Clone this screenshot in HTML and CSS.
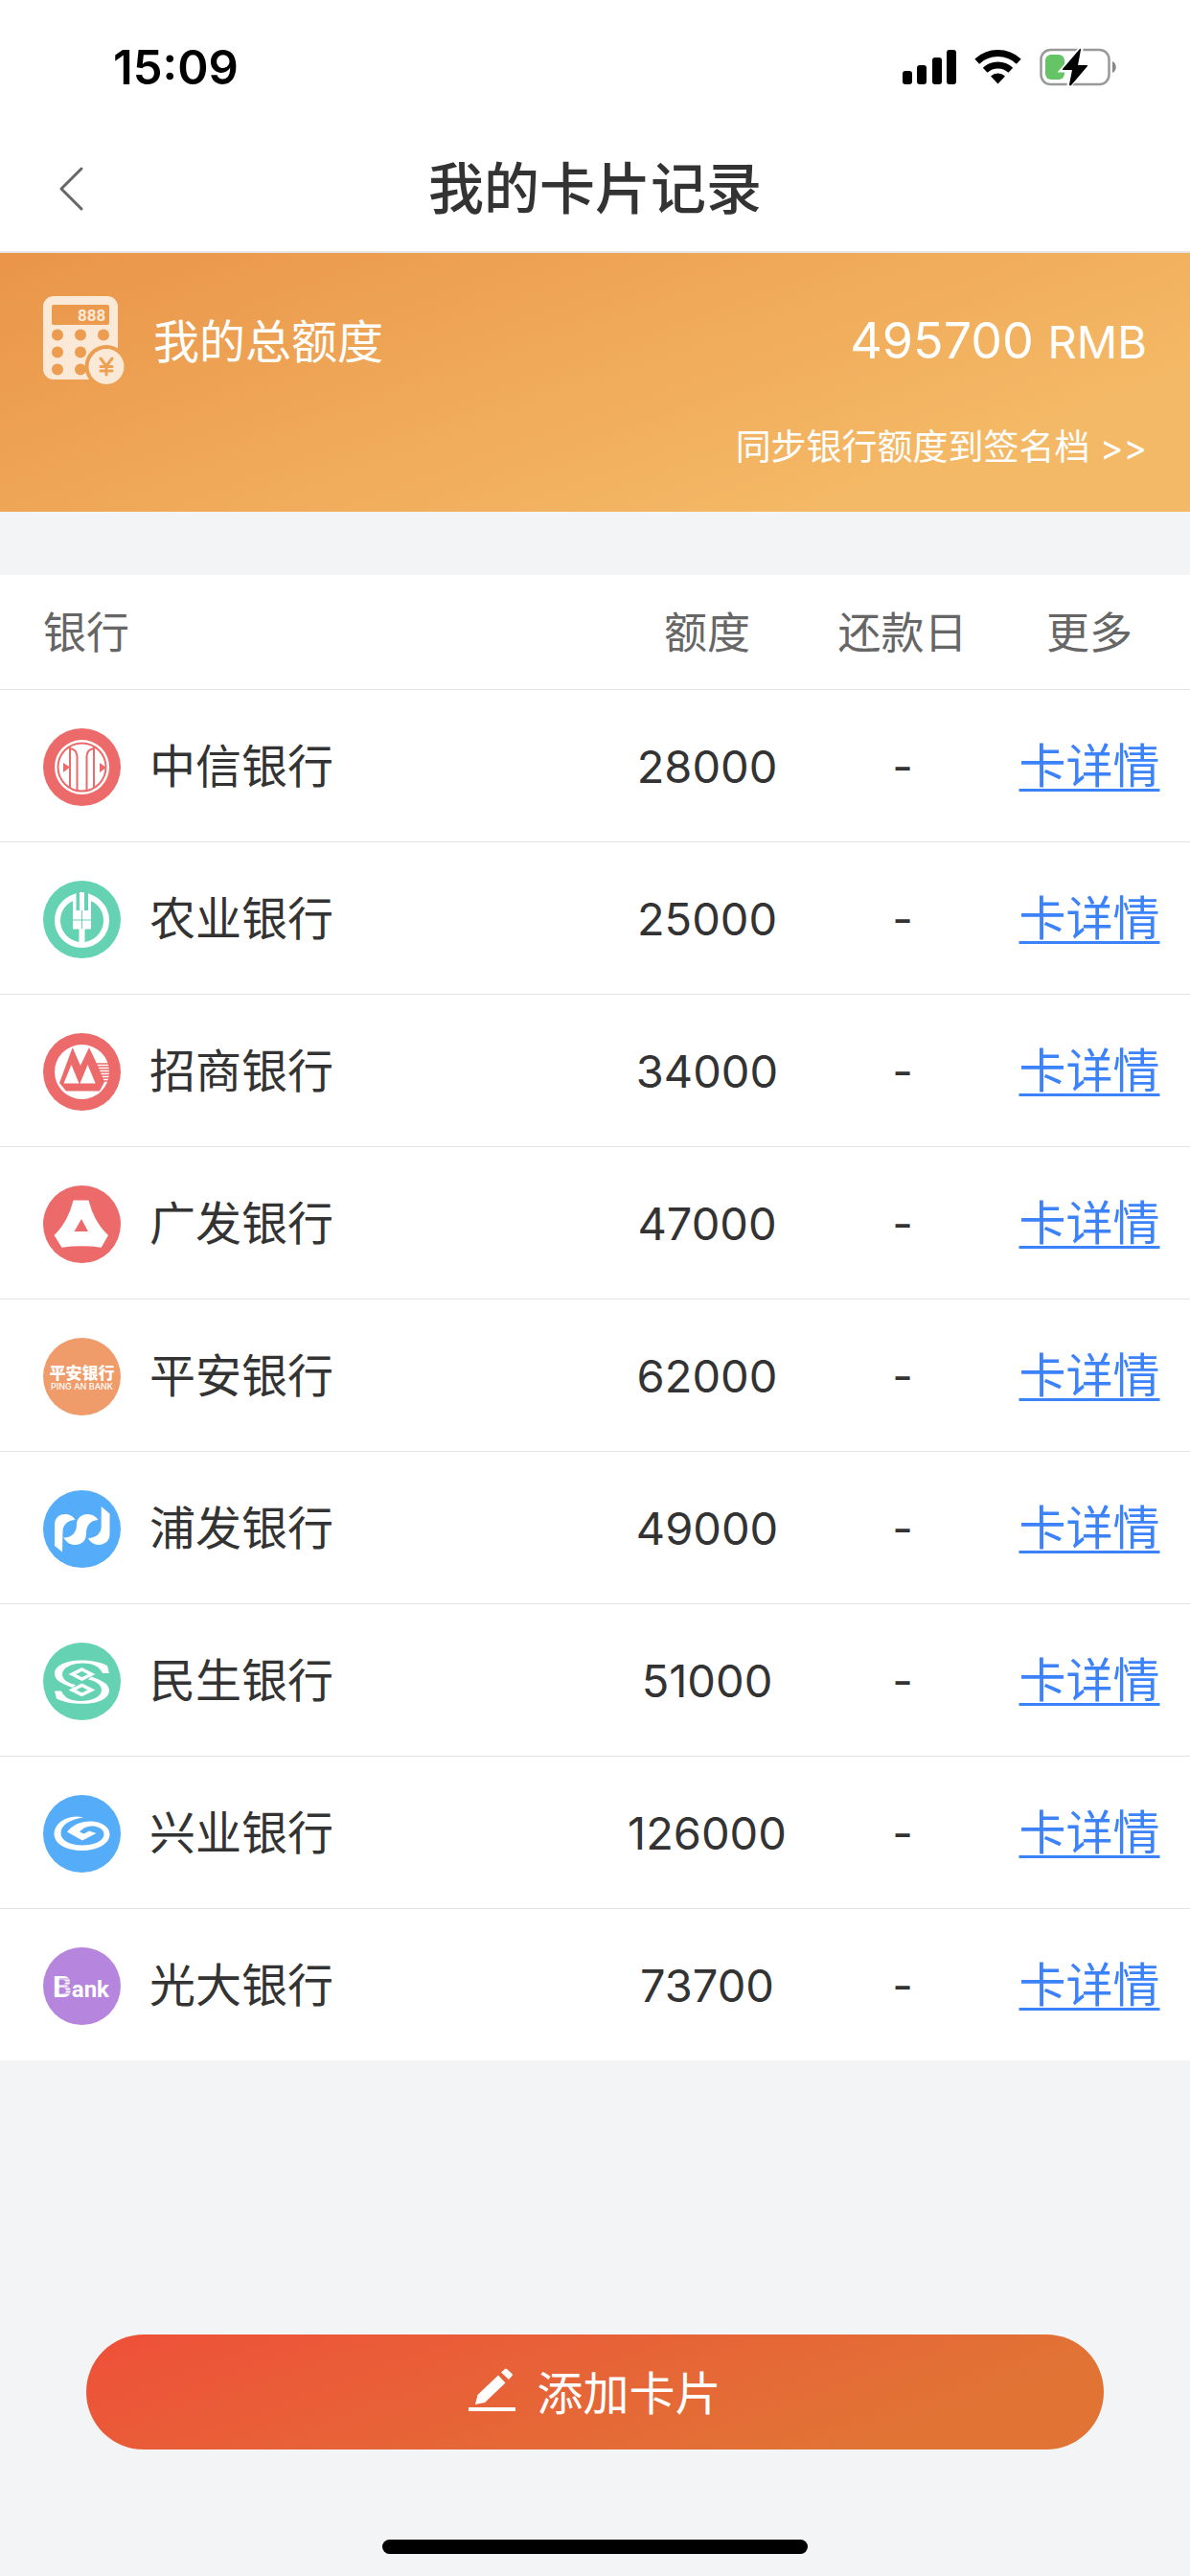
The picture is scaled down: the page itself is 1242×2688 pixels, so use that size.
FILE: index.html
```html
<!DOCTYPE html>
<html lang="zh-CN">
<head>
    <meta charset="UTF-8">
    <meta name="viewport" content="width=device-width, initial-scale=1.0">
    <title>我的卡片记录</title>
    <link rel="stylesheet" href="styles.css">
</head>
<body>

    <!-- Status Bar -->
    <div class="status-bar">
        <span class="time">15:09</span>
        <div class="status-icons">
            <svg width="56" height="36" viewBox="0 0 56 36">
                <rect x="0" y="22" width="10" height="14" rx="3"/>
                <rect x="15" y="16" width="10" height="20" rx="3"/>
                <rect x="31" y="8" width="10" height="28" rx="3"/>
                <rect x="46" y="0" width="10" height="36" rx="3"/>
            </svg>
            <svg width="49" height="36" viewBox="0 0 49 36">
                <path d="M2.7 12.1A32 32 0 0 1 46.3 12.1M11.2 21.2A19.5 19.5 0 0 1 37.8 21.2" fill="none" stroke="#000" stroke-width="7"/>
                <path d="M24.5 35.5L17 27.5A11 11 0 0 1 32 27.5Z"/>
            </svg>
            <svg width="80" height="40" viewBox="0 0 80 40">
                <rect x="1.5" y="2" width="71" height="36" rx="10" fill="none" stroke="#999" stroke-width="2.5"/>
                <path d="M76 14C81 16 81 24 76 26Z" fill="#888"/>
                <rect x="6" y="7" width="20" height="26" rx="6" fill="#65c466"/>
                <path d="M43 1L24 23H34L31 39L50 18H40Z" stroke="#fff" stroke-width="5"/>
                <path d="M42 1L24 22Q23 23 25 23H34L31 38Q31 40 33 39L50 19Q51 18 49 18H40L43 2Q43 0 42 1Z"/>
            </svg>
        </div>
    </div>

    <!-- Navigation Bar -->
    <div class="navbar">
        <a href="#" class="back" aria-label="返回">
            <svg width="28" height="48" viewBox="0 0 28 48">
                <path d="M25 3L4 24L25 45" fill="none" stroke="#666" stroke-width="3" stroke-linecap="round" stroke-linejoin="round"/>
            </svg>
        </a>
        <h1>我的卡片记录</h1>
    </div>

    <!-- Total limit -->
    <div class="total">
        <div class="total-row">
            <svg class="total-icon" width="85" height="92" viewBox="0 0 85 92">
                <mask id="calc">
                    <rect width="78" height="87" rx="11" fill="#fff"/>
                    <rect x="9" y="9" width="60" height="21" rx="2" fill="#000"/>
                    <circle cx="15" cy="40.5" r="6"/>
                    <circle cx="39" cy="40.5" r="6"/>
                    <circle cx="63" cy="40.5" r="6"/>
                    <circle cx="15" cy="58.5" r="6"/>
                    <circle cx="39" cy="58.5" r="6"/>
                    <circle cx="15" cy="76.5" r="6"/>
                    <circle cx="39" cy="76.5" r="6"/>
                    <circle cx="66" cy="73.5" r="22.5"/>
                </mask>
                <rect width="85" height="92" fill="#fbe9d8" mask="url(#calc)"/>
                <text x="36" y="26" class="calc-digits">888</text>
                <circle cx="66" cy="73.5" r="18.5" fill="#fbe9d8"/>
                <path d="M60 65L66 73L72 65M66 73V82M60 73.5H72M60 78H72" fill="none" stroke="#eda154" stroke-width="3" stroke-linecap="round"/>
            </svg>
            <span class="total-label">我的总额度</span>
            <span class="total-value">495700 <small>RMB</small></span>
        </div>
        <a href="#" class="sync">同步银行额度到签名档 &gt;&gt;</a>
    </div>

    <!-- Card list -->
    <table class="cards">
        <thead>
            <tr>
                <th class="col-bank">银行</th>
                <th class="col-limit">额度</th>
                <th class="col-day">还款日</th>
                <th class="col-more">更多</th>
            </tr>
        </thead>
        <tbody>
            <tr>
                <td>
                    <div class="bank">
                        <svg class="logo" viewBox="0 0 81 81">
                            <circle cx="40.5" cy="40.5" r="40.5" fill="#ec6a6a"/>
                            <circle cx="40.5" cy="40.5" r="28.5" fill="#fff"/>
                            <circle cx="40.5" cy="40.5" r="25" fill="none" stroke="#ec6a6a" stroke-width="2"/>
                            <path d="M28 19V62M28 21Q35 22 35.500 29V65M53 19V62M53 21Q46 22 45.500 29V65" fill="none" stroke="#ec6a6a" stroke-width="2"/>
                            <path d="M21 36L28 40.500L21 46ZM59 36L66 41L59 46Z" fill="#ec6a6a"/>
                        </svg>
                        中信银行
                    </div>
                </td>
                <td>28000</td>
                <td>-</td>
                <td><a href="#">卡详情</a></td>
            </tr>
            <tr>
                <td>
                    <div class="bank">
                        <svg class="logo" viewBox="0 0 81 81">
                            <circle cx="40.5" cy="40.5" r="40.5" fill="#65d2b3"/>
                            <circle cx="40.5" cy="41.5" r="25.5" fill="none" stroke="#fff" stroke-width="6"/>
                            <path d="M34 10H47V32H34Z" fill="#65d2b3"/>
                            <path d="M31 15L34.500 13V31H38V12H43V31H47V13L50 15V50.500H43.500V68H37.500V50.500H31Z" fill="#fff"/>
                            <path d="M40.500 31V50M31 41H50" stroke="#65d2b3" stroke-width="1"/>
                        </svg>
                        农业银行
                    </div>
                </td>
                <td>25000</td>
                <td>-</td>
                <td><a href="#">卡详情</a></td>
            </tr>
            <tr>
                <td>
                    <div class="bank">
                        <svg class="logo" viewBox="0 0 81 81">
                            <circle cx="40.5" cy="40.5" r="40.5" fill="#ec6a6a"/>
                            <circle cx="40.5" cy="40.5" r="28.5" fill="#fff"/>
                            <path d="M17 52L30.700 15L39 34L48 15L57 34L64 51L59 60.500H24Z" fill="#ec6a6a"/>
                            <path d="M21.500 52.500L29.500 33L37.500 52.500ZM38.500 52.500L46.500 33L54.700 52.500Z" fill="#fff"/>
                            <path d="M56 32H69M57 35H69M58 38H69M59 41H69M60 44H69M61 47H69M62 50H68" stroke="#ec6a6a" stroke-width="1.500"/>
                        </svg>
                        招商银行
                    </div>
                </td>
                <td>34000</td>
                <td>-</td>
                <td><a href="#">卡详情</a></td>
            </tr>
            <tr>
                <td>
                    <div class="bank">
                        <svg class="logo" viewBox="0 0 81 81">
                            <circle cx="40.5" cy="40.5" r="40.5" fill="#ec6a6a"/>
                            <path d="M31.500 15.500H47.500Q53 38 68 52L60.700 64.700Q40.500 62 19.500 64.700L11.500 52Q26 38 31.500 15.500Z" fill="#fff"/>
                            <path d="M40 35L47 48H32.500Z" fill="#ec6a6a"/>
                        </svg>
                        广发银行
                    </div>
                </td>
                <td>47000</td>
                <td>-</td>
                <td><a href="#">卡详情</a></td>
            </tr>
            <tr>
                <td>
                    <div class="bank">
                        <svg class="logo" viewBox="0 0 81 81">
                            <circle cx="40.5" cy="40.5" r="40.5" fill="#f09b6a"/>
                            <text x="40.5" y="43" class="pingan-cn">平安银行</text>
                            <text x="40.5" y="54" class="pingan-en">PING AN BANK</text>
                        </svg>
                        平安银行
                    </div>
                </td>
                <td>62000</td>
                <td>-</td>
                <td><a href="#">卡详情</a></td>
            </tr>
            <tr>
                <td>
                    <div class="bank">
                        <svg class="logo" viewBox="0 0 81 81">
                            <circle cx="40.5" cy="40.5" r="40.5" fill="#55adf9"/>
                            <g fill="#fff">
                                <path d="M12 58V36C12 28 18 25 23 25C28 25 31.500 27.500 33.500 31C26 31 20.500 36 20.500 43L20 64.500Z"/>
                                <path d="M57.500 31C55 27 51 25 46.500 25C40 25 35 29 35 36C35 43 31 49.500 21.500 49.500C24 54.500 28.500 57 33.500 57C40 57 45 53 45 45C45 37 49 31.500 57.500 31Z"/>
                                <path d="M60.700 17L69.500 24.500V46C69.500 53 64 57 58 57C53 57 49 54 47 50C55 50 60.700 45 60.700 38Z"/>
                            </g>
                        </svg>
                        浦发银行
                    </div>
                </td>
                <td>49000</td>
                <td>-</td>
                <td><a href="#">卡详情</a></td>
            </tr>
            <tr>
                <td>
                    <div class="bank">
                        <svg class="logo" viewBox="0 0 81 81">
                            <circle cx="40.5" cy="40.5" r="40.5" fill="#65d2b3"/>
                            <g id="half">
                                <path d="M69 32L67 24C58 20 50 18.600 40 18.600C24 18.600 12 24 12 32.500C12 39 19 43 31 47L34 44C25 42 20 38 20 33C20 26 30 21.500 42 21.500C52 21.500 59 25 62 32Z" fill="#fff"/>
                                <path d="M40.500 28L50.500 33L40.500 38L30.500 33Z" fill="none" stroke="#fff" stroke-width="3.500"/>
                            </g>
                            <use href="#half" transform="rotate(180 40.500 41.200)"/>
                        </svg>
                        民生银行
                    </div>
                </td>
                <td>51000</td>
                <td>-</td>
                <td><a href="#">卡详情</a></td>
            </tr>
            <tr>
                <td>
                    <div class="bank">
                        <svg class="logo" viewBox="0 0 81 81">
                            <circle cx="40.5" cy="40.5" r="40.5" fill="#55adf9"/>
                            <path d="M30 23C18 25 11.500 33 11.500 40.500C11.500 51 24 58 40.500 58C57 58 69.500 51 69.500 41C69.500 33 60 27.500 50 27.500C38 27.500 30 32 25 38.500L41 47.500L55.500 40L48 37.500L42.500 40.500L38 38.500C42 34 47 32.500 52 32.500C59 33 63.500 36.500 63.500 41C63.500 48 53 52.500 40.500 52.500C28 52.500 18.500 47.500 18.500 40C18.500 32 26 26 42 23.500Q36 22 30 23Z" fill="#fff"/>
                        </svg>
                        兴业银行
                    </div>
                </td>
                <td>126000</td>
                <td>-</td>
                <td><a href="#">卡详情</a></td>
            </tr>
            <tr>
                <td>
                    <div class="bank">
                        <svg class="logo" viewBox="0 0 81 81">
                            <circle cx="40.5" cy="40.5" r="40.5" fill="#b685dd"/>
                            <text x="10" y="52" class="everbright"><tspan class="everbright-b">B</tspan>ank</text>
                            <path d="M17 33H29M17 36H29M17 39H29M17 42H29M17 45H29M17 48H29" stroke="#b685dd" stroke-width="1"/>
                        </svg>
                        光大银行
                    </div>
                </td>
                <td>73700</td>
                <td>-</td>
                <td><a href="#">卡详情</a></td>
            </tr>
        </tbody>
    </table>

    <!-- Footer -->
    <div class="footer">
        <button class="add-btn">
            <svg width="49" height="46" viewBox="0 0 49 46">
                <path d="M7 38L9.500 28L31 7.500L38.500 15.500L17 36ZM34 4.500L38 1Q39 0 40 1L45.500 6Q46.500 7 45.500 8L42 12Z" fill="#fff"/>
                <rect y="41" width="49" height="4" fill="#fff"/>
            </svg>
            添加卡片
        </button>
        <div class="home-bar"></div>
    </div>

</body>
</html>
```
FILE: styles.css
```css
body {
    font-family: Inter, "Noto Sans CJK SC", sans-serif;
    font-size: 48px;
    color: #333;
    background-color: #f3f4f6;
    margin: 0;
    min-height: 100vh;
    display: flex;
    flex-direction: column;
}

svg {
    display: block;
    flex-shrink: 0;
}

.status-bar {
    background: white;
    height: 132px;
    padding: 8px 77px 0 118px;
    box-sizing: border-box;
    display: flex;
    justify-content: space-between;
    align-items: center;
}
.time {
    color: black;
    font-size: 49px;
    font-weight: 600;
}
.status-icons {
    display: flex;
    align-items: center;
    gap: 19px;
}

.navbar {
    background: white;
    height: 130px;
    border-bottom: 2px solid #e5e5e8;
    display: flex;
    align-items: center;
    justify-content: center;
    position: relative;
}
.navbar h1 {
    margin: 0;
    font-size: 58px;
    font-weight: 500;
    line-height: 80px;
}
.back {
    position: absolute;
    left: 60px;
}

.total {
    color: white;
    background: linear-gradient(160deg, #ea9549, #f4b966 80%);
    height: 270px;
    padding: 45px 45px 0;
    box-sizing: border-box;
}
.total-row {
    display: flex;
    align-items: center;
    height: 92px;
}
.total-label {
    margin-left: 30px;
    padding-bottom: 4px;
}
.total-value {
    margin-left: auto;
    font-size: 52px;
}
.total-value small {
    font-size: 47px;
}
.sync {
    display: block;
    margin-top: 40px;
    text-align: right;
    font-size: 37px;
    line-height: 52px;
    color: white;
    text-decoration: none;
}
.calc-digits {
    font: 700 17px Roboto, sans-serif;
    fill: #fbe9d8;
}

.cards {
    width: 100%;
    margin-top: 66px;
    background: white;
    border-collapse: separate;
    border-spacing: 0;
    table-layout: fixed;
}
.cards th,
.cards td {
    padding: 2px 0 0;
    text-align: center;
    vertical-align: middle;
    border-bottom: 1px solid #e3e3e5;
}
.cards th {
    height: 117px;
    font-size: 45px;
    font-weight: 400;
    color: #666;
    line-height: 64px;
}
.cards td {
    height: 156px;
    font-size: 47px;
    line-height: 68px;
}
.cards tr:last-child td {
    border-bottom: 0;
}
.cards th.col-bank {
    padding-left: 45px;
    text-align: left;
}
.col-limit {
    width: 228px;
}
.col-day {
    width: 180px;
}
.col-more {
    width: 210px;
}
.cards a {
    font-size: 49px;
    color: #3c82fa;
    text-decoration: underline;
    text-decoration-thickness: 3px;
    text-underline-offset: 6px;
}

.bank {
    display: flex;
    align-items: center;
    gap: 30px;
    padding-left: 45px;
    font-size: 48px;
}
.logo {
    width: 81px;
    height: 81px;
}
.pingan-cn {
    font: 900 17px "Noto Sans CJK SC", sans-serif;
    fill: white;
    text-anchor: middle;
}
.pingan-en {
    font: 500 9px Inter, sans-serif;
    fill: white;
    text-anchor: middle;
}
.everbright {
    font: 700 24px Roboto, sans-serif;
    fill: white;
}
.everbright-b {
    font-size: 31px;
}

.footer {
    margin-top: auto;
    padding: 0 90px 23px;
}
.add-btn {
    width: 100%;
    height: 120px;
    padding: 0 0 4px;
    border: 0;
    border-radius: 60px;
    background: linear-gradient(160deg, #ee5039, #e17335 80%);
    color: white;
    font-family: inherit;
    font-size: 48px;
    display: flex;
    align-items: center;
    justify-content: center;
    gap: 22px;
    cursor: pointer;
}
.home-bar {
    width: 444px;
    height: 15px;
    margin: 94px auto 0;
    border-radius: 8px;
    background: black;
}
```
